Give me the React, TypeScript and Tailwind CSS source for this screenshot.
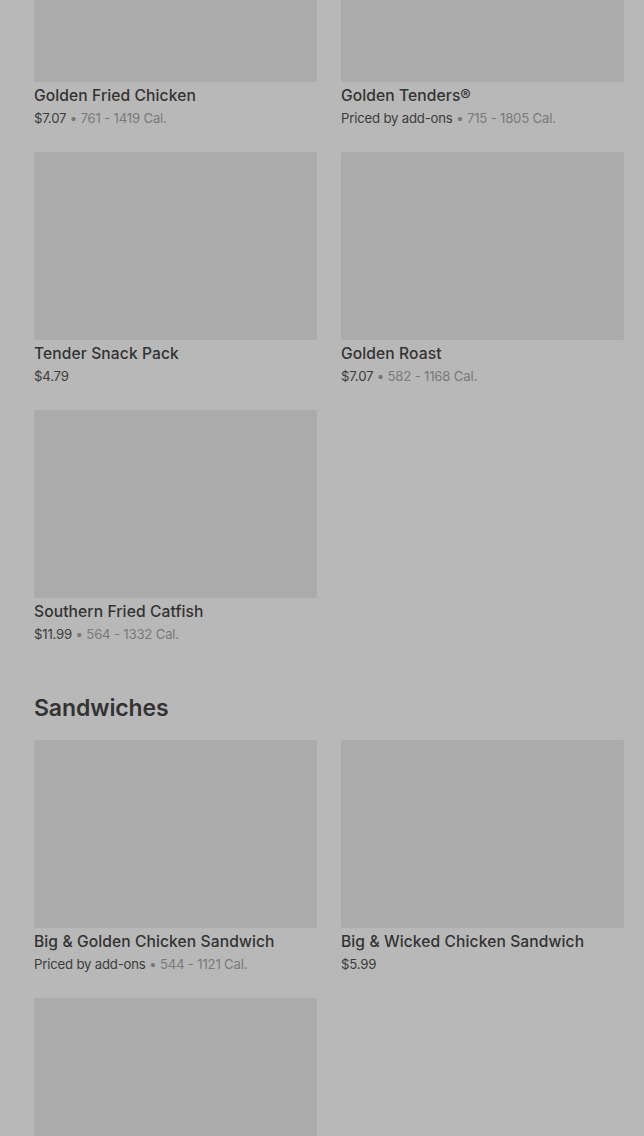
type Item = {
  name: string;
  price: string;
  cal?: string;
};

const sections: { title?: string; items: Item[] }[] = [
  {
    items: [
      { name: "Golden Fried Chicken", price: "$7.07", cal: "761 - 1419 Cal." },
      { name: "Golden Tenders®", price: "Priced by add-ons", cal: "715 - 1805 Cal." },
      { name: "Tender Snack Pack", price: "$4.79" },
      { name: "Golden Roast", price: "$7.07", cal: "582 - 1168 Cal." },
      { name: "Southern Fried Catfish", price: "$11.99", cal: "564 - 1332 Cal." },
    ],
  },
  {
    title: "Sandwiches",
    items: [
      { name: "Big & Golden Chicken Sandwich", price: "Priced by add-ons", cal: "544 - 1121 Cal." },
      { name: "Big & Wicked Chicken Sandwich", price: "$5.99" },
      { name: "Crispy Chicken Sandwich", price: "$4.99" },
    ],
  },
];

function MenuCard({ item }: { item: Item }) {
  return (
    <div className="flex flex-col">
      <div className="h-[188px] w-full rounded-[2px] bg-[#ababab]" />
      <div className="mt-[2px] text-[15.6px] leading-[24px] font-medium text-[#333333] tracking-[0.1px]">
        {item.name}
      </div>
      <div className="text-[13.2px] leading-[20px] text-[#3c3c3c] tracking-[-0.2px]">
        {item.price}
        {item.cal && (
          <>
            <span className="text-[#777777]"> • </span>
            <span className="text-[#7a7a7a]">{item.cal}</span>
          </>
        )}
      </div>
    </div>
  );
}

export default function App() {
  return (
    <div
      className="h-[1136px] w-full overflow-hidden bg-[#b8b8b8]"
      style={{ fontFamily: "Inter, 'Noto Sans', sans-serif" }}
    >
      <div className="-mt-[106px] pl-[34px] pr-[20px]">
        {sections.map((section, i) => (
          <div key={i} className={i > 0 ? "mt-[48px]" : ""}>
            {section.title && (
              <h2 className="mb-[16px] text-[23px] leading-[32px] font-semibold text-[#333333] tracking-[-0.1px]">
                {section.title}
              </h2>
            )}
            <div className="grid grid-cols-2 gap-x-[24px] gap-y-[24px]">
              {section.items.map((item) => (
                <MenuCard key={item.name} item={item} />
              ))}
            </div>
          </div>
        ))}
      </div>
    </div>
  );
}
